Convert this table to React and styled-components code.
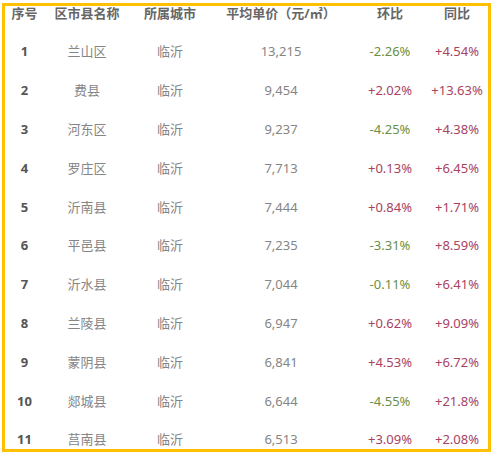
import React from "react";
import styled, { createGlobalStyle } from "styled-components";

const GlobalStyle = createGlobalStyle`
  html, body {
    margin: 0;
    padding: 0;
    background: #ffffff;
  }
  body {
    font-family: "Noto Sans", "Noto Sans CJK SC", sans-serif;
  }
`;

const colors = {
  border: "#ffc000",
  head: "#666666",
  index: "#555555",
  text: "#858585",
  up: "#a8425f",
  down: "#6a8f45"
};

const columns = "39px 86px 80px 142px 76px 58px";

const Page = styled.div`
  width: 494px;
  height: 456px;
  padding: 3px 3px 0 2px;
  box-sizing: border-box;
  background: #fff;
`;

const Frame = styled.div`
  width: 489px;
  height: 449px;
  box-sizing: border-box;
  border: 3px solid ${colors.border};
  overflow: hidden;
  padding-left: 0;
`;

const HeadRow = styled.div`
  display: grid;
  grid-template-columns: ${columns};
  height: 26px;
  align-items: start;
`;

const HeadCell = styled.div`
  text-align: center;
  font-size: 13px;
  line-height: 14px;
  font-weight: 700;
  color: ${colors.head};
  white-space: nowrap;
`;

const Row = styled.div`
  display: grid;
  grid-template-columns: ${columns};
  height: 38.8px;
  align-items: center;
`;

const Cell = styled.div`
  text-align: center;
  font-size: 13px;
  line-height: 16px;
  white-space: nowrap;
  color: ${(p) => p.color || colors.text};
  font-weight: ${(p) => (p.bold ? 700 : 400)};
`;

const headers = ["序号", "区市县名称", "所属城市", "平均单价（元/㎡）", "环比", "同比"];

const rows = [
  ["兰山区", "13,215", "-2.26%", "+4.54%"],
  ["费县", "9,454", "+2.02%", "+13.63%"],
  ["河东区", "9,237", "-4.25%", "+4.38%"],
  ["罗庄区", "7,713", "+0.13%", "+6.45%"],
  ["沂南县", "7,444", "+0.84%", "+1.71%"],
  ["平邑县", "7,235", "-3.31%", "+8.59%"],
  ["沂水县", "7,044", "-0.11%", "+6.41%"],
  ["兰陵县", "6,947", "+0.62%", "+9.09%"],
  ["蒙阴县", "6,841", "+4.53%", "+6.72%"],
  ["郯城县", "6,644", "-4.55%", "+21.8%"],
  ["莒南县", "6,513", "+3.09%", "+2.08%"]
];

const trendColor = (v) => (v.startsWith("-") ? colors.down : colors.up);

export default function App() {
  return (
    <Page>
      <GlobalStyle />
      <Frame>
        <HeadRow>
          {headers.map((h) => (
            <HeadCell key={h}>{h}</HeadCell>
          ))}
        </HeadRow>
        {rows.map(([name, price, mom, yoy], i) => (
          <Row key={name}>
            <Cell bold color={colors.index}>
              {i + 1}
            </Cell>
            <Cell>{name}</Cell>
            <Cell>临沂</Cell>
            <Cell>{price}</Cell>
            <Cell color={trendColor(mom)}>{mom}</Cell>
            <Cell color={trendColor(yoy)}>{yoy}</Cell>
          </Row>
        ))}
      </Frame>
    </Page>
  );
}
